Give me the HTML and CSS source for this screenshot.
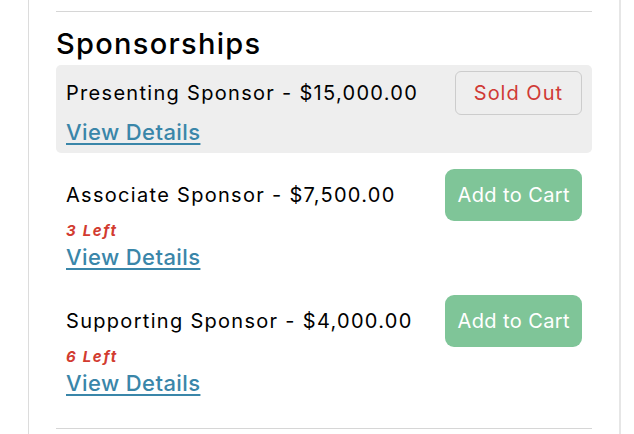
FILE: index.html
```html
<!DOCTYPE html>
<html>
<head>
<meta charset="utf-8">
<link rel="stylesheet" href="styles.css">
</head>
<body>
<div class="panel">
  <hr class="rule rule-top">
  <h2 class="title">Sponsorships</h2>
  <div class="item item-soldout">
    <div class="row">
      <span class="name">Presenting Sponsor - $15,000.00</span>
      <button class="btn btn-sold">Sold Out</button>
    </div>
    <a class="details" href="#">View Details</a>
  </div>
  <div class="item">
    <div class="row">
      <span class="name">Associate Sponsor - $7,500.00</span>
      <button class="btn btn-cart">Add to Cart</button>
    </div>
    <div class="left">3 Left</div>
    <a class="details" href="#">View Details</a>
  </div>
  <div class="item">
    <div class="row">
      <span class="name">Supporting Sponsor - $4,000.00</span>
      <button class="btn btn-cart">Add to Cart</button>
    </div>
    <div class="left">6 Left</div>
    <a class="details" href="#">View Details</a>
  </div>
  <hr class="rule rule-bottom">
</div>
</body>
</html>
```
FILE: styles.css
```css
html, body {
  margin: 0;
  padding: 0;
  background: #fff;
}
body {
  font-family: Inter, "Liberation Sans", sans-serif;
  color: #111;
  height: 434px;
  overflow: hidden;
}
.panel {
  margin-left: 28px;
  width: 536px;
  padding: 11px 27px 0;
  border-left: 1px solid #dcdcdc;
  border-right: 2px solid #e6e6e6;
  min-height: 500px;
}
.rule {
  border: 0;
  border-top: 1px solid #d6d6d6;
  margin: 0;
}
.title {
  font-size: 29px;
  font-weight: 500;
  margin: 0;
  padding-top: 14px;
  line-height: 36px;
  letter-spacing: 1.3px;
  color: #000;
}
.item {
  padding: 6px 10px 8px;
  border-radius: 5px;
  margin-top: 3px;
}
.item + .item {
  margin-top: 6px;
  padding-top: 10px;
  padding-bottom: 9px;
}
.item-soldout {
  background: #eeeeee;
}
.row {
  display: flex;
  justify-content: space-between;
  align-items: center;
}
.name {
  font-size: 20px;
  letter-spacing: 1.3px;
  color: #000;
}
.btn {
  font-family: inherit;
  font-size: 20px;
  letter-spacing: 1px;
  cursor: pointer;
}
.btn-sold {
  height: 44px;
  padding: 0 18px;
  border: 1px solid #cccccc;
  border-radius: 6px;
  background: #eeeeee;
  color: #d03a35;
}
.btn-cart {
  height: 52px;
  padding: 0 12px;
  border: 0;
  border-radius: 9px;
  background: #7fc598;
  color: #fff;
  letter-spacing: 0.4px;
}
.left {
  font-size: 15px;
  font-weight: 700;
  font-style: italic;
  color: #d23b30;
  letter-spacing: 1.7px;
  line-height: 18px;
  margin-top: 1px;
}
.details {
  display: inline-block;
  font-size: 22px;
  font-weight: 500;
  letter-spacing: 0.4px;
  color: #3a86a9;
  text-decoration: underline;
  text-decoration-thickness: 2px;
  text-underline-offset: 3px;
  line-height: 26px;
  margin-top: 4px;
}
.rule-bottom {
  margin-top: 23px;
}
```
